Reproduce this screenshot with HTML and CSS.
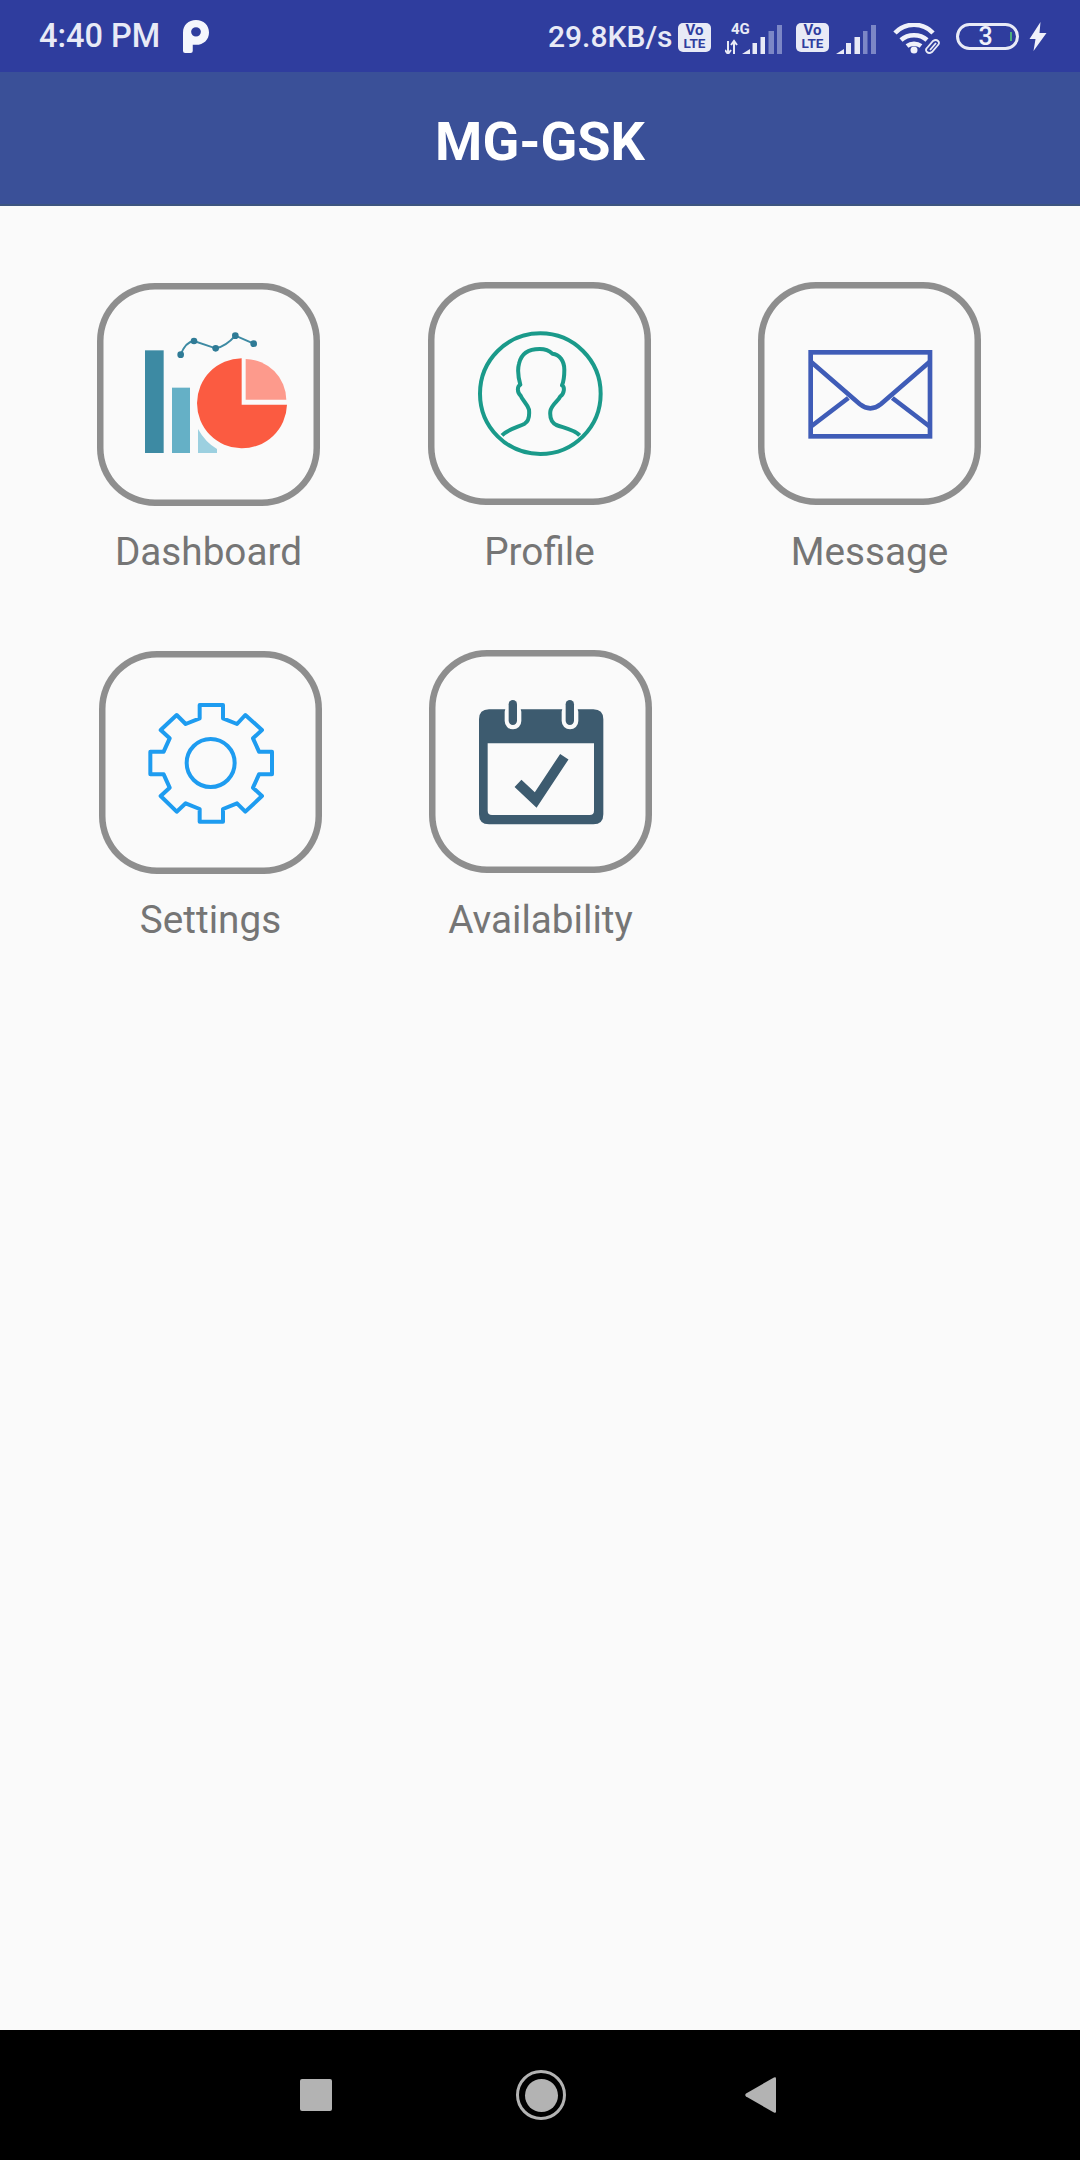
FILE: index.html
```html
<!DOCTYPE html>
<html lang="en">
<head>
<meta charset="utf-8">
<title>MG-GSK</title>
<link rel="stylesheet" href="styles.css">
</head>
<body>
<div class="screen">
  <div class="status">
    <span class="time">4:40 PM</span>
    <svg class="p-logo" width="26" height="33" viewBox="0 0 24 32" preserveAspectRatio="none"><path fill-rule="evenodd" fill="#f5f6fc" d="M0 12C0 5 5 0 12 0s12 5 12 12-5 12-12 12H9v6q0 2-2 2H2q-2 0-2-2ZM12 7a4.500 4.500 0 1 0 0 9 4.500 4.500 0 0 0 0-9Z"/></svg>
    <span class="speed">29.8KB/s</span>
    <div class="volte"><span>Vo</span><span class="lte">LTE</span></div>
    <div class="net">
      <span class="net-label">4G</span>
      <svg width="57" height="31" viewBox="0 0 57 31">
        <path d="M3 18v13M0 27l3 4 3-4M9 31V18M6 22l3-4 3 4" fill="none" stroke="#e8eaf6" stroke-width="2"/>
        <path d="M17 31l8-5v5zM27.500 20H32v11h-4.500zM35.500 14H40v17h-4.500z" fill="#e8eaf6"/>
        <path d="M43.500 8H49v23h-5.500zM52 2h5v29h-5z" fill="#7c87c6"/>
      </svg>
    </div>
    <div class="volte volte-second"><span>Vo</span><span class="lte">LTE</span></div>
    <svg class="sig" width="40" height="31" viewBox="0 0 40 31">
      <path d="M0 31l8-5v5zM10 20h5v11h-5zM18.500 14H24v17h-5.500z" fill="#e8eaf6"/>
      <path d="M27 8h4.500v23H27zM35 2h5v29h-5z" fill="#7c87c6"/>
    </svg>
    <svg class="wifi" width="47" height="32" viewBox="0 0 47 32">
      <path d="M2 10C12-1 30-1 40 10M8 17c7-6.500 19-6.500 26 0M14 23c4-3 10-3 14 0" fill="none" stroke="#f0f1fa" stroke-width="4.500"/>
      <circle cx="21" cy="27" r="3.500" fill="#f0f1fa"/>
      <path d="M34 25l6-7q3-2 5 0t0 4l-6 7q-3 2-5 0t0-4M37 27l6-7" fill="none" stroke="#e8eaf6" stroke-width="1.800"/>
    </svg>
    <div class="battery"><span class="battery-num">3</span><i class="battery-tick"></i></div>
    <svg class="bolt" width="19" height="29" viewBox="0 0 18 29"><path d="M12 0L1 17h6l-2 12 13-18h-7z" fill="#f0f1fa"/></svg>
  </div>

  <header class="appbar"><h1 class="title">MG-GSK</h1></header>

  <main class="grid">
    <div class="tile">
      <div class="box box-low">
        <svg viewBox="52 40 669 669">
          <rect x="196" y="242" width="56" height="308" fill="#3d8aa3"/>
          <rect x="277" y="354" width="54" height="196" fill="#65b0c6"/>
          <path d="M355 478q22 40 57 60v12h-57z" fill="#9cd0e0"/>
          <path d="M303 255q14-38 40-41l65 22q30-5 59-38l55 24" fill="none" stroke="#3d8aa3" stroke-width="6"/>
          <g fill="#2f7b96"><circle cx="303" cy="255" r="10"/><circle cx="343" cy="214" r="10"/><circle cx="408" cy="236" r="10"/><circle cx="467" cy="198" r="10"/><circle cx="522" cy="222" r="10"/></g>
          <path d="M486 266V405H622A135 135 0 1 1 486 266Z" fill="#fb5b41"/>
          <path d="M498 268A124 124 0 0 1 620 390H498Z" fill="#fd9a8c"/>
        </svg>
      </div>
      <span class="label">Dashboard</span>
    </div>
    <div class="tile">
      <div class="box">
        <svg viewBox="55 37 669 669">
          <g fill="none" stroke="#1a9a8a" stroke-width="12" stroke-linejoin="round">
            <circle cx="392" cy="372" r="181"/>
            <path d="M277 497C295 478 325 472 345 462C358 454 360 440 358 420C352 400 338 392 333 378C322 368 322 350 332 345C325 320 323 300 328 282C335 250 360 238 390 238C405 238 420 244 428 252C450 254 464 275 464 300C464 320 462 335 457 347C466 352 464 372 452 380C445 395 425 405 422 425C420 445 425 458 440 466C465 475 495 480 510 497"/>
          </g>
        </svg>
      </div>
      <span class="label">Profile</span>
    </div>
    <div class="tile tile-message">
      <div class="box">
        <svg viewBox="55 37 669 669">
          <g fill="none" stroke="#3f5cb7" stroke-width="14">
            <rect x="213" y="248" width="358" height="252"/>
            <path d="M212 275L360 403q32 26 64 0L572 275"/>
            <path d="M212 472L326 385M572 472L458 385"/>
          </g>
        </svg>
      </div>
      <span class="label">Message</span>
    </div>
    <div class="tile tile-settings">
      <div class="box box-low">
        <svg viewBox="58 33 669 669">
          <g fill="none" stroke="#1e9cf0" stroke-width="12" stroke-linejoin="round">
            <circle cx="393" cy="369" r="72"/>
            <path d="M360 195H430V235L472 252 497 225 547 270 520 295 538 335H577V403H538L520 443 547 468 497 515 472 490 430 507V545H360V507L318 490 291 515 243 468 270 443 252 403H212V335H252L270 295 243 270 291 225 318 252 360 235Z"/>
          </g>
        </svg>
      </div>
      <span class="label">Settings</span>
    </div>
    <div class="tile tile-availability">
      <div class="box">
        <svg viewBox="58 30 669 669">
          <path fill-rule="evenodd" fill="#3d5b6f" d="M238 208H551Q581 208 581 238V523Q581 553 551 553H238Q208 553 208 523V238Q208 208 238 208ZM234 310V512Q234 525 247 525H540Q553 525 553 512V310Z"/>
          <g fill="#fafafa"><rect x="285" y="190" width="50" height="78" rx="25"/><rect x="456" y="190" width="50" height="78" rx="25"/></g>
          <g fill="#3d5b6f"><rect x="297" y="180" width="25" height="75" rx="12.500"/><rect x="468" y="180" width="25" height="75" rx="12.500"/></g>
          <path d="M325 430L378 480 464 350" fill="none" stroke="#3d5b6f" stroke-width="30" stroke-linejoin="miter"/>
        </svg>
      </div>
      <span class="label">Availability</span>
    </div>
  </main>

  <nav class="navbar">
    <i class="nav-square"></i>
    <i class="nav-home"><i class="nav-home-dot"></i></i>
    <svg class="nav-back" width="31" height="36" viewBox="0 0 30 36" preserveAspectRatio="none"><path d="M1 16.500L28 .5q2-1 2 1v33q0 2-2 1L1 19.500q-1.500-1.500 0-3Z" fill="#b3b3b3"/></svg>
  </nav>
</div>
</body>
</html>
```

FILE: styles.css
```css
* { box-sizing: border-box; }
html, body { margin: 0; padding: 0; }
body { font-family: Roboto, "Liberation Sans", sans-serif; background: #fafafa; }

.screen { width: 1080px; height: 2160px; display: flex; flex-direction: column; overflow: hidden; }

.status {
  height: 72px; flex: none; background: #2f3d9e; color: #e8eaf6;
  display: flex; align-items: center; padding-left: 39px;
}
.time { font-size: 32.500px; font-weight: 500; width: 144px; white-space: nowrap; flex: none; }
.p-logo { flex: none; }
.speed { font-size: 30px; font-weight: 500; margin-left: 339px; width: 130px; white-space: nowrap; flex: none; }
.volte {
  width: 33px; height: 29px; border-radius: 5px; background: #e8eaf6; color: #2f3d9e;
  display: flex; flex-direction: column; align-items: center; justify-content: center;
  font-size: 15px; line-height: 13px; font-weight: 700; flex: none; margin-top: 2px;
}
.lte { font-size: 13.500px; }
.net { position: relative; width: 57px; height: 31px; margin-left: 14px; margin-top: 4px; flex: none; }
.net svg { display: block; }
.net-label {
  position: absolute; left: 6px; top: -1px; font-size: 15px; line-height: 14px; font-weight: 700; color: #e8eaf6;
}
.volte-second { margin-left: 14px; }
.sig { flex: none; margin-left: 7px; margin-top: 4px; }
.wifi { flex: none; margin-left: 16.500px; margin-top: 5px; }
.battery {
  width: 63px; height: 27px; border: 3px solid #e8eaf6; border-radius: 14px; margin-left: 16px; flex: none;
  display: flex; align-items: center; justify-content: center; position: relative;
}
.battery-num { font-size: 25px; line-height: 21px; font-weight: 500; color: #f0f1fa; margin-right: 3px; }
.battery-tick { position: absolute; right: 4px; top: 6px; width: 2px; height: 9px; background: #4caf7a; }
.bolt { flex: none; margin-left: 9px; }

.appbar {
  height: 134px; flex: none; background: #3a5098; border-bottom: 2px solid #3d5580; padding-top: 7px;
  display: flex; align-items: center; justify-content: center;
}
.title { margin: 0; color: #fff; font-size: 54px; font-weight: 700; line-height: 60px; }

.grid {
  flex: 1; display: grid; grid-template-columns: repeat(3, 223px); column-gap: 108px; row-gap: 75px;
  padding: 76px 0 0 97px; align-content: start;
}
.tile { width: 223px; display: flex; flex-direction: column; align-items: center; }
.tile-message { margin-left: -1px; }
.tile-settings { margin-left: 2px; }
.tile-availability { margin-left: 1px; }

.box {
  width: 223px; height: 223px; flex: none; border-radius: 58px;
  box-shadow: inset 0 0 0 6.500px #8e8e8e;
}
.box-low { margin-top: 1px; margin-bottom: -1px; }
.box svg { display: block; width: 223px; height: 223px; }

.label {
  margin-top: 23px; font-size: 38.700px; line-height: 47px; color: #757575; white-space: nowrap;
}

.navbar {
  height: 130px; flex: none; background: #000; display: flex; align-items: center; padding-left: 300px;
}
.nav-square { display: block; width: 32px; height: 32px; background: #b3b3b3; border-radius: 2px; flex: none; }
.nav-home {
  display: flex; align-items: center; justify-content: center; width: 50px; height: 50px; margin-left: 184px;
  border: 3px solid #b3b3b3; border-radius: 50%; flex: none;
}
.nav-home-dot { display: block; width: 33px; height: 33px; background: #b3b3b3; border-radius: 50%; }
.nav-back { flex: none; margin-left: 179px; }
```
